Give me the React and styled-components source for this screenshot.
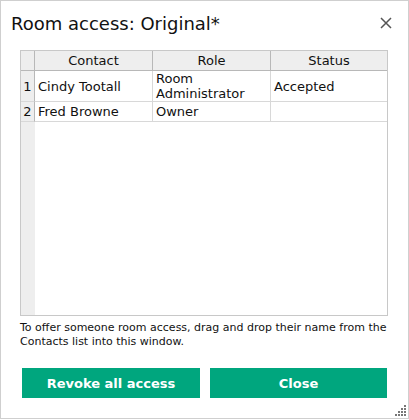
import React from "react";
import styled, { createGlobalStyle } from "styled-components";

const GlobalStyle = createGlobalStyle`
  html, body {
    margin: 0;
    padding: 0;
    background: #fff;
  }
  body {
    font-family: "DejaVu Sans", "Liberation Sans", sans-serif;
  }
`;

const members = [
  { id: 1, contact: "Cindy Tootall", role: "Room Administrator", status: "Accepted" },
  { id: 2, contact: "Fred Browne", role: "Owner", status: "" },
];

function App() {
  return (
    <>
      <GlobalStyle />
      <Dialog>
        <TitleBar>
          <Title>Room access: Original*</Title>
          <CloseIcon aria-label="close">
            <svg width="12" height="12" viewBox="0 0 12 12">
              <path d="M1 1L11 11M11 1L1 11" stroke="#555" strokeWidth="1.5" />
            </svg>
          </CloseIcon>
        </TitleBar>
        <Grid>
          <Corner />
          <HeadCell>Contact</HeadCell>
          <HeadCell>Role</HeadCell>
          <HeadCell $last>Status</HeadCell>
          {members.map((m) => (
            <React.Fragment key={m.id}>
              <RowNum>{m.id}</RowNum>
              <Cell>{m.contact}</Cell>
              <Cell $wrap>{m.role}</Cell>
              <Cell $last>{m.status}</Cell>
            </React.Fragment>
          ))}
          <FillerNum />
          <Filler />
        </Grid>
        <Hint>
          To offer someone room access, drag and drop their name from the
          Contacts list into this window.
        </Hint>
        <Buttons>
          <Button>Revoke all access</Button>
          <Button>Close</Button>
        </Buttons>
        <Grip>
          <svg width="12" height="12" viewBox="0 0 12 12">
            {[
              [10, 1], [10, 4], [7, 4], [10, 7], [7, 7], [4, 7],
              [10, 10], [7, 10], [4, 10], [1, 10],
            ].map(([x, y]) => (
              <rect key={`${x}-${y}`} x={x} y={y} width="2" height="2" fill="#777" />
            ))}
          </svg>
        </Grip>
      </Dialog>
    </>
  );
}

export default App;

const Dialog = styled.div`
  position: relative;
  box-sizing: border-box;
  width: 409px;
  height: 419px;
  border: 1px solid #cfcfcf;
  display: flex;
  flex-direction: column;
  padding: 0 20px 0 19px;
  color: #111;
`;

const TitleBar = styled.div`
  height: 49px;
  display: flex;
  align-items: center;
  justify-content: space-between;
  margin-left: -9px;
  padding-bottom: 5px;
  box-sizing: border-box;
`;

const Title = styled.h1`
  margin: 0;
  font-size: 18px;
  font-weight: 400;
  color: #111;
`;

const CloseIcon = styled.span`
  display: flex;
  margin-right: -4px;
`;

const Grid = styled.div`
  height: 266px;
  box-sizing: border-box;
  border: 1px solid #c8c8c8;
  display: grid;
  grid-template-columns: 14px 118px 118px 1fr;
  grid-template-rows: 20px 31px 20px 1fr;
  font-size: 13px;
`;

const Corner = styled.div`
  background: #eeeeee;
  border-right: 1px solid #b8b8b8;
  border-bottom: 1px solid #b8b8b8;
`;

const HeadCell = styled.div`
  background: #eeeeee;
  border-right: ${(p) => (p.$last ? "none" : "1px solid #b8b8b8")};
  border-bottom: 1px solid #b8b8b8;
  text-align: center;
  line-height: 19px;
`;

const RowNum = styled.div`
  background: #eeeeee;
  border-right: 1px solid #b8b8b8;
  border-bottom: 1px solid #d8d8d8;
  display: flex;
  align-items: center;
  justify-content: center;
`;

const Cell = styled.div`
  border-right: ${(p) => (p.$last ? "none" : "1px solid #d8d8d8")};
  border-bottom: 1px solid #d8d8d8;
  display: flex;
  align-items: center;
  padding: 0 3px;
  line-height: 15px;
  overflow: hidden;
  white-space: ${(p) => (p.$wrap ? "normal" : "nowrap")};
`;

const FillerNum = styled.div`
  background: #eeeeee;
`;

const Filler = styled.div`
  grid-column: 2 / 5;
`;

const Hint = styled.p`
  margin: 5px 0 0 0;
  font-size: 11px;
  line-height: 14px;
  color: #111;
`;

const Buttons = styled.div`
  display: grid;
  grid-template-columns: 178px 177px;
  gap: 10px;
  margin: 19px 0 0 2px;
`;

const Button = styled.button`
  height: 30px;
  border: none;
  background: #00a67e;
  color: #fff;
  font-family: "DejaVu Sans", sans-serif;
  font-weight: 700;
  font-size: 13px;
  cursor: pointer;
`;

const Grip = styled.div`
  position: absolute;
  right: 2px;
  bottom: 2px;
  display: flex;
`;
